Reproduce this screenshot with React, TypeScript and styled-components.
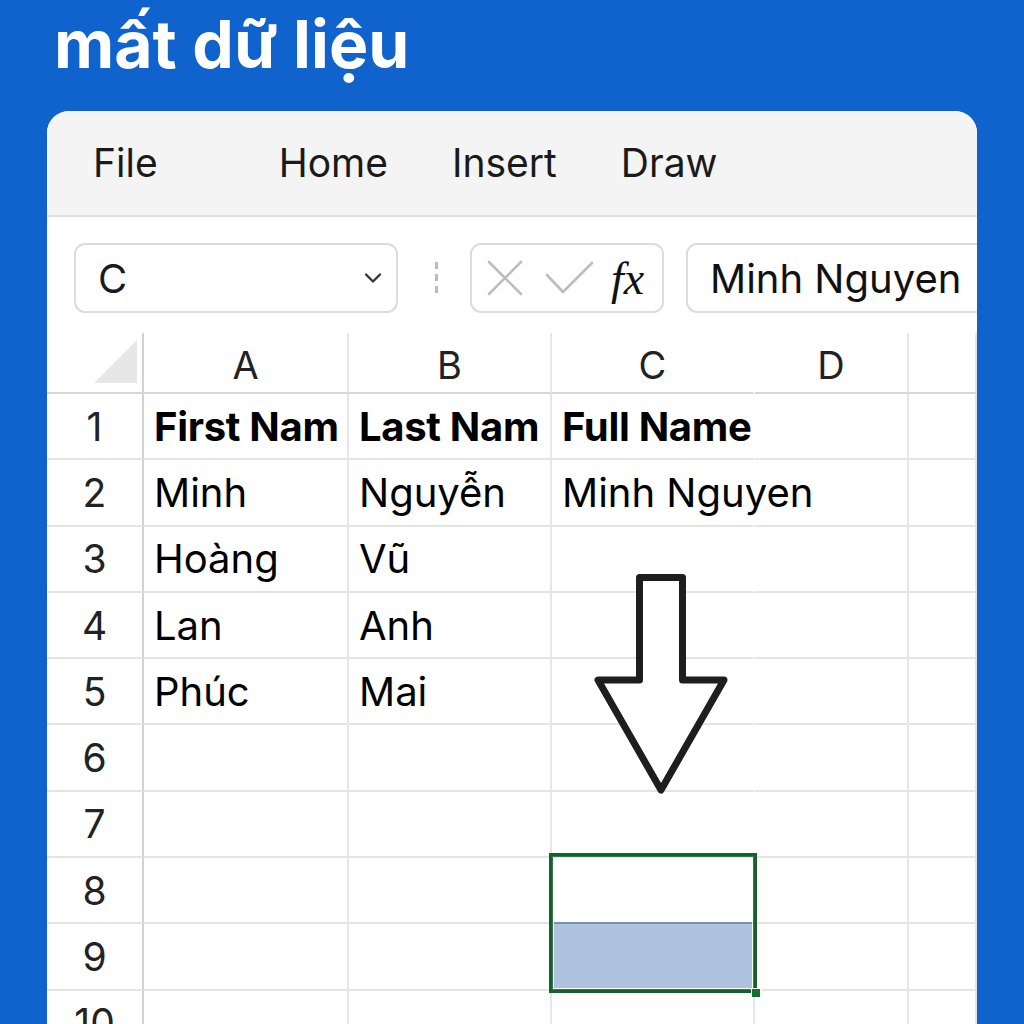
import React from 'react'
import styled, { createGlobalStyle } from 'styled-components'
import { ChevronDown } from 'lucide-react'

const GlobalStyle = createGlobalStyle`
	html, body {
		margin: 0;
		padding: 0;
		background: #1062cc;
		overflow: hidden;
	}
	* {
		box-sizing: border-box;
	}
`

const columns = ['A', 'B', 'C', 'D', '']

const rows: { n: number; cells: string[]; bold?: boolean }[] = [
	{ n: 1, cells: ['First Nam', 'Last Nam', 'Full Name', '', ''], bold: true },
	{ n: 2, cells: ['Minh', 'Nguyễn', 'Minh Nguyen', '', ''] },
	{ n: 3, cells: ['Hoàng', 'Vũ', '', '', ''] },
	{ n: 4, cells: ['Lan', 'Anh', '', '', ''] },
	{ n: 5, cells: ['Phúc', 'Mai', '', '', ''] },
	{ n: 6, cells: ['', '', '', '', ''] },
	{ n: 7, cells: ['', '', '', '', ''] },
	{ n: 8, cells: ['', '', '', '', ''] },
	{ n: 9, cells: ['', '', '', '', ''] },
	{ n: 10, cells: ['', '', '', '', ''] },
]

export default function App() {
	return (
		<>
			<GlobalStyle />
			<Page>
				<Title>mất dữ liệu</Title>
				<Card>
					<MenuBar>
						<MenuItem $wide>File</MenuItem>
						<MenuItem>Home</MenuItem>
						<MenuItem>Insert</MenuItem>
						<MenuItem>Draw</MenuItem>
					</MenuBar>
					<FormulaRow>
						<NameBox>
							<span>C</span>
							<ChevronDown size={28} strokeWidth={2} color="#333" />
						</NameBox>
						<Dots />
						<FxBox>
							<svg width="36" height="36" viewBox="0 0 36 36">
								<path
									d="M2 2 L34 34 M34 2 L2 34"
									stroke="#bdbdbd"
									strokeWidth="2.6"
									strokeLinecap="round"
								/>
							</svg>
							<svg width="50" height="34" viewBox="0 0 50 34">
								<path
									d="M2 14 L18 31 L47 2"
									stroke="#bdbdbd"
									strokeWidth="2.6"
									fill="none"
									strokeLinecap="round"
									strokeLinejoin="round"
								/>
							</svg>
							<Fx>fx</Fx>
						</FxBox>
						<FormulaInput>Minh Nguyen</FormulaInput>
					</FormulaRow>
					<Sheet>
						<Grid>
							<Corner>
								<CornerMark />
							</Corner>
							{columns.map((c, i) => (
								<ColHead key={`col-${i}`} $noRight={i === 2}>
									{c}
								</ColHead>
							))}
							{rows.map((r) => (
								<React.Fragment key={`row-${r.n}`}>
									<RowHead>{r.n}</RowHead>
									{r.cells.map((v, i) => (
										<Cell
											key={`cell-${r.n}-${i}`}
											$bold={r.bold}
											$clip={i < 2}
											$noRight={i === 2 && r.n < 10}
										>
											{v}
										</Cell>
									))}
								</React.Fragment>
							))}
						</Grid>
						<Arrow width="170" height="250" viewBox="0 0 170 250">
							<path
								d="M59.5 17.5 L102.5 17.5 L102.5 120 L144 120 L81 230 L18 120 L59.5 120 Z"
								fill="#ffffff"
								stroke="#1e1e1e"
								strokeWidth="7"
								strokeLinejoin="round"
							/>
						</Arrow>
						<Selection>
							<SelectedFill />
							<FillHandle />
						</Selection>
					</Sheet>
				</Card>
			</Page>
		</>
	)
}

const Page = styled.div`
	width: 1024px;
	height: 1024px;
	display: flex;
	flex-direction: column;
	font-family: Inter, 'Noto Sans', sans-serif;
`

const Title = styled.h1`
	margin: 0;
	padding: 12px 0 0 54px;
	height: 111px;
	flex-shrink: 0;
	font-family: Inter, sans-serif;
	font-weight: 700;
	font-size: 66px;
	line-height: 64px;
	color: #ffffff;
`

const Card = styled.div`
	margin-left: 47px;
	width: 930px;
	flex: 1;
	min-height: 0;
	background: #ffffff;
	border-radius: 22px 22px 0 0;
	overflow: hidden;
	display: flex;
	flex-direction: column;
`

const MenuBar = styled.div`
	flex-shrink: 0;
	height: 106px;
	background: #f4f4f4;
	border-bottom: 2px solid #dedede;
	display: flex;
	align-items: center;
	padding: 0 0 2px 46px;
	gap: 64px;
`

const MenuItem = styled.div<{ $wide?: boolean }>`
	font-size: 39px;
	color: #1a1a1a;
	margin-right: ${(p) => (p.$wide ? '57px' : '0')};
`

const FormulaRow = styled.div`
	flex-shrink: 0;
	display: flex;
	align-items: flex-start;
	padding: 26px 0 0 27px;
	height: 116px;
	margin-right: -40px;
`

const Box = styled.div`
	height: 70px;
	border: 2px solid #dcdcdc;
	border-radius: 11px;
	display: flex;
	align-items: center;
	background: #ffffff;
`

const NameBox = styled(Box)`
	width: 324px;
	justify-content: space-between;
	padding: 0 9px 0 22px;
	font-size: 40px;
	color: #1a1a1a;
`

const Dots = styled.div`
	width: 3px;
	height: 34px;
	margin: 19px 32px 0 37px;
	background: repeating-linear-gradient(
		to bottom,
		#bcbcbc 0,
		#bcbcbc 7px,
		transparent 7px,
		transparent 12px
	);
`

const FxBox = styled(Box)`
	width: 194px;
	padding-left: 15px;
	gap: 22px;
`

const Fx = styled.span`
	font-family: 'Liberation Serif', serif;
	font-style: italic;
	font-size: 46px;
	color: #111;
	margin-left: -6px;
`

const FormulaInput = styled(Box)`
	flex: 1;
	margin-left: 22px;
	padding-left: 22px;
	font-size: 40px;
	color: #111;
	white-space: nowrap;
`

const Sheet = styled.div`
	position: relative;
	flex: 1;
	min-height: 0;
`

const Grid = styled.div`
	display: grid;
	grid-template-columns: 97px 205px 203px 203px 154px 1fr;
	grid-template-rows: 61px;
	grid-auto-rows: 66.3px;
`

const Corner = styled.div`
	border-right: 2px solid #d2d2d2;
	border-bottom: 2px solid #d6d6d6;
	display: flex;
	align-items: flex-end;
	justify-content: flex-end;
	padding: 0 5px 9px 0;
`

const CornerMark = styled.div`
	width: 43px;
	height: 43px;
	background: #e6e6e6;
	clip-path: polygon(100% 0, 100% 100%, 0 100%);
`

const ColHead = styled.div<{ $noRight?: boolean }>`
	border-bottom: 2px solid #d6d6d6;
	border-right: 2px solid ${(p) => (p.$noRight ? 'transparent' : '#e6e6e6')};
	display: flex;
	align-items: center;
	justify-content: center;
	font-size: 38px;
	color: #222;
	padding-top: 4px;
`

const RowHead = styled.div`
	border-right: 2px solid #d2d2d2;
	border-bottom: 2px solid #e4e4e4;
	display: flex;
	align-items: center;
	justify-content: center;
	font-size: 39px;
	color: #222;
`

const Cell = styled.div<{ $bold?: boolean; $noRight?: boolean; $clip?: boolean }>`
	border-right: 2px solid ${(p) => (p.$noRight ? 'transparent' : '#e6e6e6')};
	border-bottom: 2px solid #e4e4e4;
	display: flex;
	align-items: center;
	padding-left: 10px;
	font-size: 40px;
	font-weight: ${(p) => (p.$bold ? 700 : 400)};
	letter-spacing: ${(p) => (p.$bold ? '-0.3px' : '0')};
	color: #000;
	white-space: nowrap;
	overflow: ${(p) => (p.$clip ? 'hidden' : 'visible')};
	position: relative;
	z-index: ${(p) => (p.$clip ? 0 : 1)};
`

const Arrow = styled.svg`
	position: absolute;
	left: 533px;
	top: 227px;
	z-index: 2;
`

const Selection = styled.div`
	position: absolute;
	left: 502px;
	top: 520px;
	width: 208px;
	height: 140px;
	border: 3px solid #17602e;
	box-shadow: inset 0 0 0 1px #2f7a45;
	padding: 0 2px 2px 2px;
	display: flex;
	flex-direction: column;
	justify-content: flex-end;
	z-index: 2;
`

const SelectedFill = styled.div`
	height: 66px;
	background: #afc3e1;
	border-top: 2px solid #7a90b0;
`

const FillHandle = styled.div`
	position: absolute;
	right: -7px;
	bottom: -8px;
	width: 10px;
	height: 10px;
	background: #117030;
	border: 1px solid #ffffff;
`
